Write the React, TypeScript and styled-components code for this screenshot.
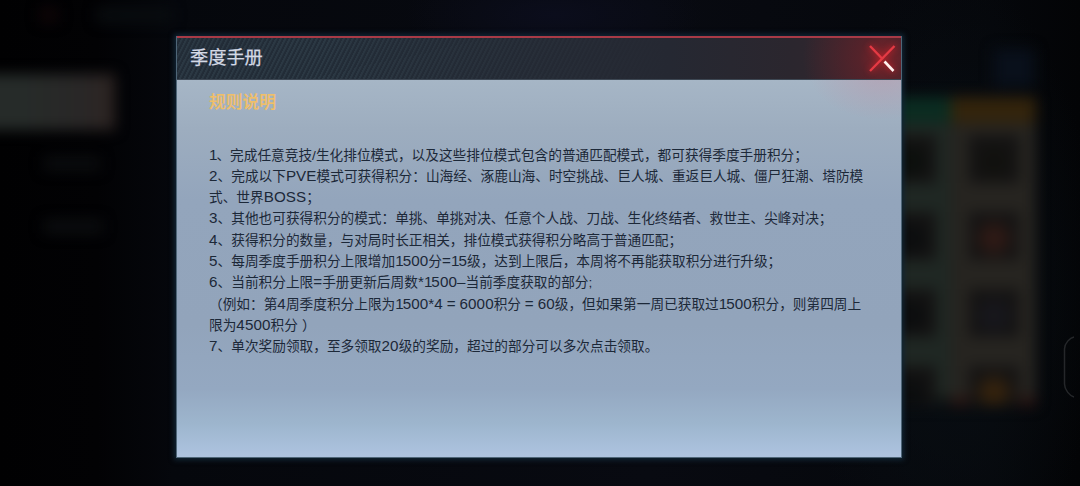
import React from "react";
import styled, { createGlobalStyle } from "styled-components";

const GlobalStyle = createGlobalStyle`
  * {
    box-sizing: border-box;
  }

  body {
    margin: 0;
    background: #020305;
    font-family: "Liberation Sans", "Noto Sans CJK SC", sans-serif;
  }
`;

const Screen = styled.div`
  position: relative;
  display: flex;
  justify-content: center;
  width: 1080px;
  height: 486px;
  padding: 36px 2px 0 0;
  overflow: hidden;
  background:
    radial-gradient(ellipse 150px 50px at 555px 15px, #0b0d1c, transparent),
    radial-gradient(ellipse 150px 320px at 950px 290px, #090f14, transparent),
    linear-gradient(90deg, #010102 0%, #020204 9%, #05070c 16%, #080a11 60%, #05070b 92%, #030406 100%);
`;

// --- 배경 (흐린 게임 화면) ---
const Backdrop = styled.div`
  position: absolute;
  inset: 0;
  display: flex;
  justify-content: space-between;
  filter: blur(7px);
`;

const SideMenu = styled.div`
  display: flex;
  flex-direction: column;
  width: 200px;
  margin-left: -20px;
`;

const TopBar = styled.div`
  display: flex;
  justify-content: space-between;
  height: 74px;
  padding: 8px 8px 0 60px;
`;

const Blob = styled.div<{ $w: number; $h: number; $color: string }>`
  width: ${(props) => props.$w}px;
  height: ${(props) => props.$h}px;
  background: ${(props) => props.$color};
`;

const ActiveMenu = styled.div`
  width: 135px;
  height: 56px;
  background: linear-gradient(90deg, #262b29 30%, #292727 75%, #2d2422);
`;

const MenuItems = styled.div`
  display: flex;
  flex-direction: column;
  gap: 50px;
  padding: 27px 0 0 64px;
`;

const Rewards = styled.div`
  display: grid;
  grid-template-columns: 80px 85px;
  align-content: start;
  padding: 49px 44px 0 0;
`;

const RewardTab = styled.div`
  grid-column: 2;
  justify-self: center;
  width: 40px;
  height: 38px;
  margin: 0 0 10px 40px;
  background: #09101b;
`;

const RewardColumn = styled.div<{ $fill: string; $head: string; $foot: string }>`
  display: flex;
  flex-direction: column;
  align-items: center;
  gap: 29px;
  height: 309px;
  overflow: hidden;
  background: linear-gradient(
    ${(props) => props.$head} 23px,
    ${(props) => props.$fill} 29px 297px,
    ${(props) => props.$foot} 303px
  );
  padding-top: 38px;
`;

const RewardCell = styled.div<{ $glow: string }>`
  width: 50px;
  height: 48px;
  flex: none;
  background: radial-gradient(circle at 50% 55%, ${(props) => props.$glow} 20%, #141313 60%);
`;

const EdgeHandle = styled.svg`
  position: absolute;
  top: 334px;
  right: 5px;
  width: 13px;
  height: 66px;
`;

// --- 다이얼로그 ---
const Dialog = styled.div`
  position: relative;
  display: flex;
  flex-direction: column;
  width: 726px;
  height: 422px;
  border: 1px solid #4f6678;
  border-top: 0;
  box-shadow: 0 0 5px 2px #122635;
`;

const Header = styled.header`
  display: flex;
  justify-content: space-between;
  align-items: center;
  height: 44px;
  flex: none;
  padding: 0 5px 2px 13px;
  border-top: 2px solid #a83a46;
  border-bottom: 1px solid #3d4753;
  background:
    radial-gradient(circle 80px at 706px 20px, #7d2229 0%, rgba(103, 32, 40, 0.65) 30%, rgba(77, 38, 45, 0) 100%),
    linear-gradient(90deg, rgba(37, 40, 50, 0) 20%, #252832 68%, #2b262e 85%, #38272e),
    repeating-linear-gradient(117deg, #2b3843 0 1.5px, #222c37 2.3px 4px);
`;

const Title = styled.h1`
  margin: 0;
  font-size: 18.2px;
  font-weight: 400;
  line-height: 40px;
  color: #d4d9e5;
  -webkit-text-stroke: 0.25px #d4d9e5;
`;

const CloseButton = styled.button`
  display: flex;
  padding: 0;
  border: 0;
  background: none;
  filter: drop-shadow(0 0 3px #d4202a);
`;

const Body = styled.main`
  flex: 1;
  padding: 11px 20px 0 32px;
  background:
    radial-gradient(ellipse 75px 50px at 706px -10px, rgba(205, 130, 150, 0.35), transparent),
    linear-gradient(#a6b6c6 0%, #9dadbf 13%, #93a5bc 32%, #92a4bb 65%, #94a8c1 82%, #9db5cd 91%, #a8bfda 97%, #afc3df 100%);
`;

const Subtitle = styled.h2`
  margin: 0 0 29.5px;
  font-size: 16.8px;
  font-weight: 500;
  line-height: 24px;
  color: #f0bf68;
  -webkit-text-stroke: 0.2px #f0bf68;
`;

const Rule = styled.p`
  margin: 0;
  height: 21.33px;
  font-size: 13.67px;
  line-height: 21.33px;
  letter-spacing: 0.01px;
  white-space: pre;
  color: #1c2838;
`;

// 숫자/영문은 한자보다 조금 크게 표시
const Latin = styled.span`
  font-size: 15.2px;
  line-height: 1;
  letter-spacing: 0.1px;
`;

const NarrowOne = styled(Latin)`
  margin-right: -1.1px;
`;

const ClosingParen = styled.span`
  margin-left: 4px;
`;

const lines: string[] = [
  "1、完成任意竞技/生化排位模式，以及这些排位模式包含的普通匹配模式，都可获得季度手册积分；",
  "2、完成以下PVE模式可获得积分：山海经、涿鹿山海、时空挑战、巨人城、重返巨人城、僵尸狂潮、塔防模",
  "式、世界BOSS；",
  "3、其他也可获得积分的模式：单挑、单挑对决、任意个人战、刀战、生化终结者、救世主、尖峰对决；",
  "4、获得积分的数量，与对局时长正相关，排位模式获得积分略高于普通匹配；",
  "5、每周季度手册积分上限增加1500分=15级，达到上限后，本周将不再能获取积分进行升级；",
  "6、当前积分上限=手册更新后周数*1500–当前季度获取的部分;",
  "（例如：第4周季度积分上限为1500*4 = 6000积分 = 60级，但如果第一周已获取过1500积分，则第四周上",
  "限为4500积分）",
  "7、单次奖励领取，至多领取20级的奖励，超过的部分可以多次点击领取。",
];

const renderText = (text: string) =>
  text.split(/(1|[02-9A-Z=*–]+|）)/).map((part, index) => {
    if (part === "1") return <NarrowOne key={index}>{part}</NarrowOne>;
    if (part === "）") return <ClosingParen key={index}>{part}</ClosingParen>;
    if (/^[02-9A-Z=*–]/.test(part)) return <Latin key={index}>{part}</Latin>;
    return part;
  });

const App: React.FC = () => {
  return (
    <>
      <GlobalStyle />
      <Screen>
        <Backdrop>
          <SideMenu>
            <TopBar>
              <Blob $w={18} $h={14} $color="#100507" />
              <Blob $w={75} $h={14} $color="#090d10" />
            </TopBar>
            <ActiveMenu />
            <MenuItems>
              <Blob $w={56} $h={13} $color="#0b0d0f" />
              <Blob $w={58} $h={13} $color="#0c0e10" />
            </MenuItems>
          </SideMenu>
          <Rewards>
            <RewardTab />
            <RewardColumn $head="#0b2c21" $fill="#1f2723" $foot="#0f1414">
              <RewardCell $glow="#0b0f0c" />
              <RewardCell $glow="#0b0d0e" />
              <RewardCell $glow="#0b0d0e" />
              <RewardCell $glow="#0b0d0e" />
            </RewardColumn>
            <RewardColumn $head="#33240c" $fill="#262420" $foot="#2c1411">
              <RewardCell $glow="#11110e" />
              <RewardCell $glow="#301a15" />
              <RewardCell $glow="#17171d" />
              <RewardCell $glow="#36230d" />
            </RewardColumn>
          </Rewards>
        </Backdrop>
        <EdgeHandle viewBox="0 0 13 66">
          <path d="M12 3 C8 4 2.500 9 2.500 15 V50 C2.500 56 8 62 12 63" fill="none" stroke="#25272a" strokeWidth="1.5" />
        </EdgeHandle>
        <Dialog>
          <Header>
            <Title>季度手册</Title>
            <CloseButton aria-label="close">
              <svg width="28" height="28" viewBox="0 0 28 28" fill="none">
                <path d="M2 2 L15 15.500 M26.500 2 L2 27" stroke="#e43a44" strokeWidth="2.4" />
                <path d="M16.500 17.500 L25.500 27" stroke="#fff1ef" strokeWidth="2.6" />
              </svg>
            </CloseButton>
          </Header>
          <Body>
            <Subtitle>规则说明</Subtitle>
            {lines.map((line, index) => (
              <Rule key={index}>{renderText(line)}</Rule>
            ))}
          </Body>
        </Dialog>
      </Screen>
    </>
  );
};

export default App;
